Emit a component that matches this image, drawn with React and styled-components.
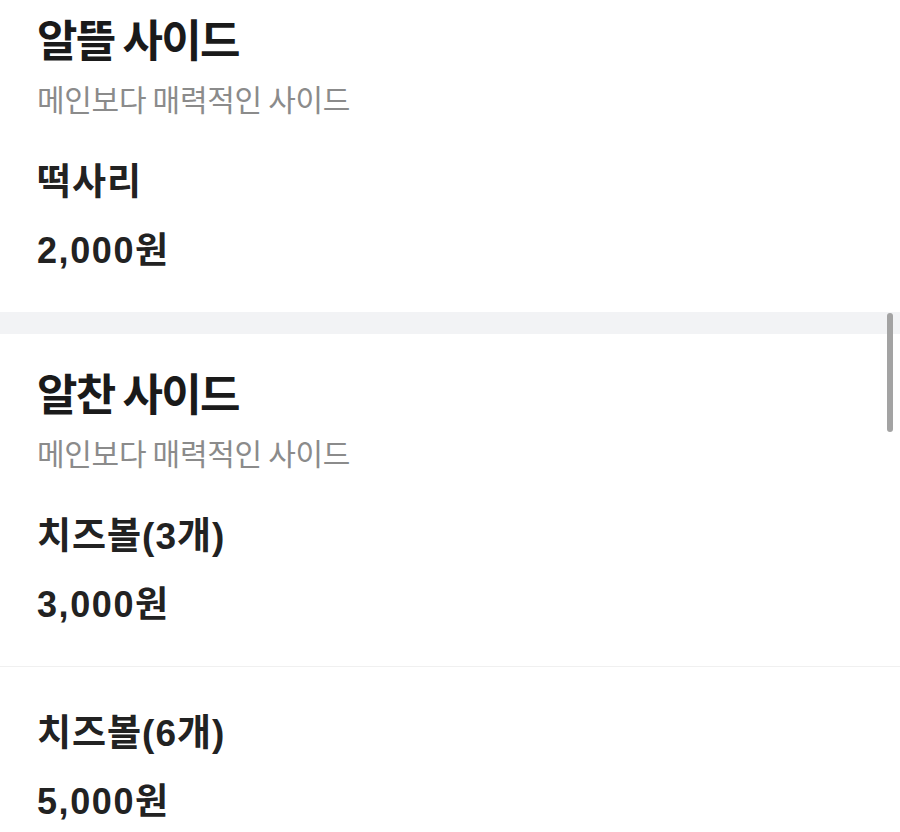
import React from "react";
import styled, { createGlobalStyle } from "styled-components";

const GlobalStyle = createGlobalStyle`
  html, body {
    margin: 0;
    padding: 0;
    background: #ffffff;
    font-family: "Noto Sans CJK KR", "Noto Sans", sans-serif;
    color: #1c1c1c;
    overflow: hidden;
  }
`;

const Page = styled.div`
  position: relative;
  width: 900px;
  height: 832px;
  overflow: hidden;
  background: #ffffff;
`;

const Section = styled.section`
  padding-top: ${(props) => props.top}px;
`;

const SectionGap = styled.div`
  height: 22px;
  background: #f2f3f5;
`;

const Head = styled.div`
  padding: 0 37px;
`;

const Title = styled.h2`
  margin: 0;
  font-size: 44px;
  line-height: 52px;
  font-weight: 700;
  color: #1a1a1a;
  letter-spacing: -1.8px;
`;

const Subtitle = styled.p`
  margin: 16px 0 0;
  font-size: 30px;
  line-height: 36px;
  font-weight: 400;
  color: #8b8b8b;
  letter-spacing: -0.3px;
`;

const Item = styled.div`
  padding: 45px 37px 40px;
  & + & {
    border-top: 1px solid #f0f0f0;
  }
`;

/* digits and brackets in a Helvetica-like face, hangul from Noto CJK */
const ItemName = styled.div`
  font-family: "Liberation Sans", "Noto Sans CJK KR", sans-serif;
  font-size: 37px;
  line-height: 44px;
  font-weight: 700;
  color: #222222;
  letter-spacing: 1px;
`;

const Price = styled.div`
  margin-top: 25px;
  font-family: "Liberation Sans", "Noto Sans CJK KR", sans-serif;
  font-size: 36px;
  line-height: 42px;
  font-weight: 700;
  color: #222222;
  letter-spacing: 1.6px;
`;

// overlay scroll indicator on the right edge
const ScrollThumb = styled.div`
  position: absolute;
  right: 7px;
  top: 313px;
  width: 6px;
  height: 119px;
  border-radius: 3px;
  background: #a3a3a3;
`;

const sections = [
  {
    title: "알뜰 사이드",
    desc: "메인보다 매력적인 사이드",
    top: 12,
    items: [{ name: "떡사리", price: "2,000원" }],
  },
  {
    title: "알찬 사이드",
    desc: "메인보다 매력적인 사이드",
    top: 32,
    items: [
      { name: "치즈볼(3개)", price: "3,000원" },
      { name: "치즈볼(6개)", price: "5,000원" },
    ],
  },
];

export default function App() {
  return (
    <Page>
      <GlobalStyle />
      {sections.map((section, i) => (
        <React.Fragment key={section.title}>
          {i > 0 && <SectionGap />}
          <Section top={section.top}>
            <Head>
              <Title>{section.title}</Title>
              <Subtitle>{section.desc}</Subtitle>
            </Head>
            {section.items.map((item) => (
              <Item key={item.name}>
                <ItemName>{item.name}</ItemName>
                <Price>{item.price}</Price>
              </Item>
            ))}
          </Section>
        </React.Fragment>
      ))}
      <ScrollThumb />
    </Page>
  );
}
